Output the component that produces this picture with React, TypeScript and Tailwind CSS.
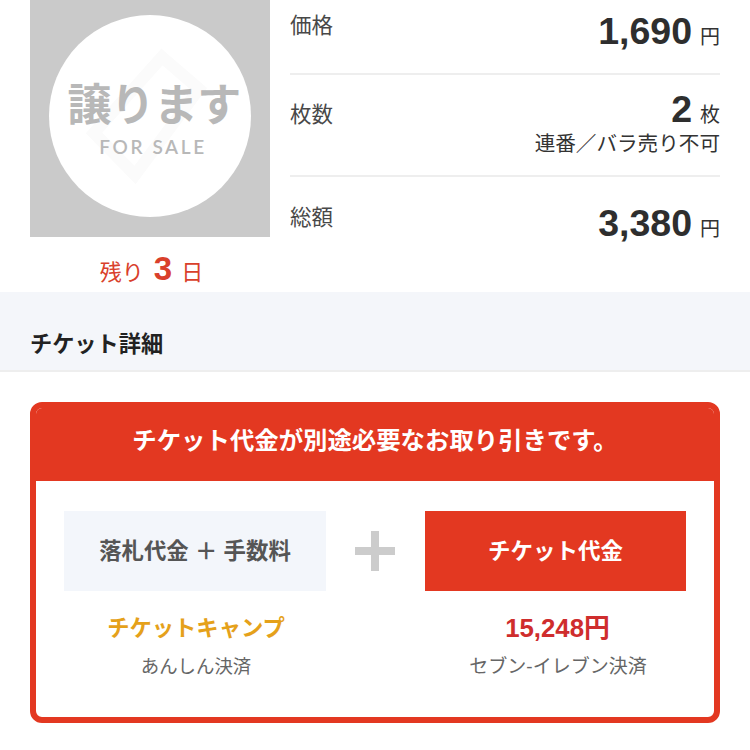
const sans = "font-['Liberation_Sans','Noto_Sans_CJK_JP',sans-serif]";

function Row({ label, value, unit, note, className }: { label: string; value: string; unit: string; note?: string; className: string }) {
  return (
    <div className={`flex justify-between ${className}`}>
      <div className="text-[21.5px] leading-[30px] text-[#484848]">{label}</div>
      <div className="flex flex-col items-end">
        <div className="flex items-baseline h-[40px]">
          <span className="text-[37.5px] leading-[40px] font-bold text-[#2e2e2e]">{value}</span>
          <span className="text-[20px] leading-[40px] text-[#333333] ml-[8px]">{unit}</span>
        </div>
        {note && <div className="text-[20.6px] leading-[26px] text-[#333333] mt-[2px]">{note}</div>}
      </div>
    </div>
  );
}

export default function App() {
  return (
    <div className={`w-[750px] h-[750px] overflow-hidden bg-white ${sans}`}>
      <section className="flex h-[292px] px-[30px] gap-[20px]">
        <div className="w-[240px]">
          <div className="relative h-[237px] bg-[#cacaca] flex justify-center">
            <div className="relative mt-[15px] w-[202px] h-[202px] rounded-full bg-white flex flex-col items-center overflow-hidden">
              <svg className="absolute left-0 top-0" width="202" height="202" viewBox="0 0 202 202">
                <path d="M113 42L150 74L86 160L45 118Z" fill="none" stroke="#fbfbfb" strokeWidth="12" />
              </svg>
              <div className="relative mt-[63px] ml-[8px] text-[44px] leading-[56px] font-bold text-[#b8b8b8] whitespace-nowrap tracking-[-0.8px]">譲ります</div>
              <div className="relative mt-[1px] ml-[6px] font-['Lato',sans-serif] font-semibold text-[19px] leading-[24px] tracking-[2.6px] text-[#b8b8b8]">FOR SALE</div>
            </div>
          </div>
          <div className="flex items-baseline justify-center h-[55px] pt-[12px] pl-[3px] text-[#d9402b] text-[22px] leading-[40px]">
            <span>残り</span>
            <span className="text-[33px] font-bold ml-[10px] mr-[9px]">3</span>
            <span>日</span>
          </div>
        </div>
        <div className="w-[430px]">
          <Row label="価格" value="1,690" unit="円" className="h-[75px] pt-[11px] border-b-2 border-[#eeeeee]" />
          <Row label="枚数" value="2" unit="枚" note="連番／バラ売り不可" className="h-[102px] pt-[14px] border-b-2 border-[#eeeeee] [&>div:first-child]:mt-[11px]" />
          <Row label="総額" value="3,380" unit="円" className="pt-[26px]" />
        </div>
      </section>

      <section className="h-[80px] bg-[#f4f6fa] border-b-2 border-[#eeeeee] px-[30px] pt-[37px]">
        <h2 className="text-[22.2px] leading-[32px] font-bold text-[#222222]">チケット詳細</h2>
      </section>

      <section className="px-[30px] pt-[30px]">
        <div className="h-[321px] rounded-[12px] border-[6px] border-[#e33821] overflow-hidden">
          <div className="h-[73px] bg-[#e33821] flex items-center justify-center text-white text-[24.4px] font-bold pb-[6px]">
            チケット代金が別途必要なお取り引きです。
          </div>
          <div className="flex px-[28px] pt-[30px]">
            <div className="w-[262px] flex flex-col items-center">
              <div className="w-full h-[80px] bg-[#f3f6fb] flex items-center justify-center text-[22.4px] font-bold text-[#555555] pt-[2px]">落札代金 ＋ 手数料</div>
              <div className="mt-[20px] ml-[2px] text-[22.3px] leading-[36px] font-bold text-[#e5a11a]">チケットキャンプ</div>
              <div className="mt-[2px] ml-[2px] text-[18.4px] leading-[36px] text-[#666666]">あんしん決済</div>
            </div>
            <div className="w-[99px] flex justify-center pt-[20px] pr-[2px]">
              <svg width="40" height="40" viewBox="0 0 40 40"><path d="M16 0H24V16H40V24H24V40H16V24H0V16H16Z" fill="#cccccc" /></svg>
            </div>
            <div className="w-[261px] flex flex-col items-center">
              <div className="w-full h-[80px] bg-[#e33821] flex items-center justify-center text-[22.5px] font-bold text-white pt-[2px]">チケット代金</div>
              <div className="mt-[19px] ml-[4px] text-[25.8px] leading-[36px] font-bold text-[#cf2d2d]">15,248円</div>
              <div className="mt-[3px] ml-[5px] text-[19px] leading-[36px] text-[#666666]">セブン-イレブン決済</div>
            </div>
          </div>
        </div>
      </section>
    </div>
  );
}
